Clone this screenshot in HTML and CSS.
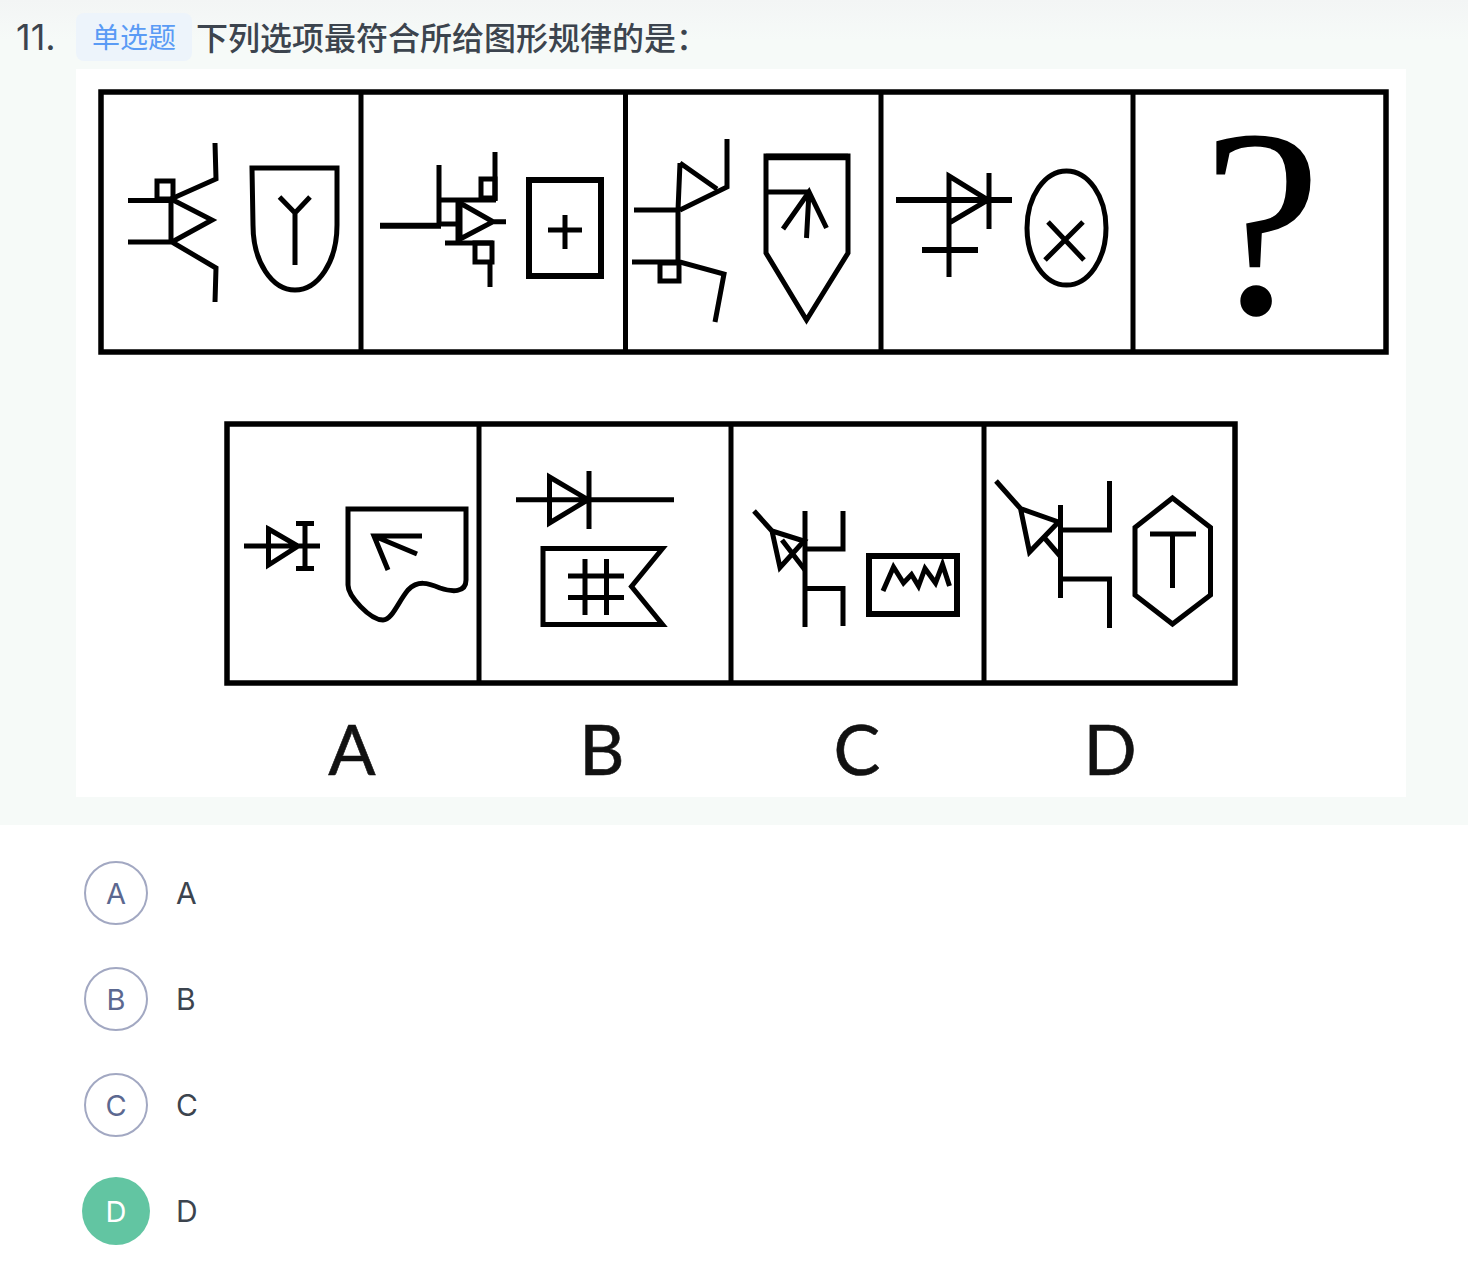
FILE: index.html
```html
<!DOCTYPE html>
<html lang="zh-CN">
<head>
    <meta charset="UTF-8">
    <meta name="viewport" content="width=device-width, initial-scale=1.0">
    <title>单选题 11</title>
    <link rel="stylesheet" href="styles.css">
</head>
<body>

    <!-- Question stem -->
    <div class="stem">
        <div class="stem-title">
            <span class="stem-num">11.</span>
            <span class="stem-tag">单选题</span>
            <span class="stem-text">下列选项最符合所给图形规律的是：</span>
        </div>

        <div class="stem-figure">
            <svg class="puzzle" viewBox="76 69 1330 728" xmlns="http://www.w3.org/2000/svg">
                <!-- top row frames -->
                <rect class="frame" x="101" y="92" width="1285" height="260"/>
                <path class="divider" d="M361 92V352M625.500 92V352M881 92V352M1133 92V352"/>

                <!-- figure 1 -->
                <path d="M215 143L216 179L171 199M128 200.500H171V242M128 242H172L216 268L215 302"/>
                <path d="M171 199L212 220L172 242"/>
                <rect x="157" y="181" width="16" height="18"/>
                <path d="M252 168H337V225C337 262 318 290 295 290C272 290 253 262 253 225Z"/>
                <path d="M295 265V213M279.500 197L295 213L310 197"/>

                <!-- figure 2 -->
                <path class="thick" d="M380 225.700H441"/>
                <path d="M439 165V226M441 200H496M495 152V201M441 224H458M458 200V243M445 243H493"/>
                <rect x="481" y="179" width="14" height="19"/>
                <path d="M460 203L493 221.700L460 239ZM493 221.700H506"/>
                <rect x="475" y="243" width="17" height="19"/>
                <path d="M490 262V287"/>
                <rect class="thick" x="529" y="180" width="72" height="96"/>
                <path d="M548 230H582M565 215V249"/>

                <!-- figure 3 -->
                <path d="M727 139V187L680 210M680 163L717 189M680 163L678 210V262M634 210H678M632 262H680L724 274L715 322"/>
                <rect x="660" y="263" width="19" height="18"/>
                <path d="M766 156H848V253L806.500 320L766 253ZM766 192H810"/>
                <path class="top-edge" d="M766 157H848"/>
                <path d="M806.500 238L809 192M783 229L809 192L826.500 228"/>

                <!-- figure 4 -->
                <path class="thick" d="M896 200H1012M922 250H978"/>
                <path d="M949 223V277M949 176L988 200L949 223ZM989 173V229"/>
                <ellipse cx="1066.500" cy="228" rx="39.500" ry="57"/>
                <path d="M1048 222L1084 260M1083 222L1045 260"/>

                <text class="mark" x="1262" y="313">?</text>

                <!-- answer row frames -->
                <rect class="frame" x="227" y="424" width="1008" height="259"/>
                <path class="divider" d="M479 424V683M731 424V683M984 424V683"/>

                <!-- option A -->
                <path d="M244 546H320M268.500 529L298 546L268.500 565ZM305 523V568M296 523.500H314M296 568.500H314"/>
                <path d="M348 509H466V580C466 593 452 592 440 588C428 583 418 580 408 590C398 602 392 620 383 620C370 620 348 596 348 585Z"/>
                <path d="M422 536H374L388 570M374 536L417 554"/>

                <!-- option B -->
                <path d="M516 499.700H674M549.500 477L588 499.700L549.500 523ZM589 471V529"/>
                <path d="M543 548.500H662.500L631.500 586.500L662.500 624.500H543Z"/>
                <path d="M585 559V615M606.500 559V615M568 576H624M568 597.500H624"/>

                <!-- option C -->
                <path d="M805 511V627M807 549H843V511M807 588.500H843V626"/>
                <path d="M754 511L772 531L804 541L780 567.500L772 531M782 540L805 570"/>
                <rect class="thick" x="869" y="556" width="88" height="58"/>
                <path d="M883 591L893.500 567L903.500 583L911.500 574.500L918.500 586L925 568.500L935.500 583L942.500 564.500L949.500 586"/>

                <!-- option D -->
                <path d="M1060.500 505V598M1063 530H1109.500V481M1063 579H1109.500V628"/>
                <path d="M996 481L1020.500 508.500L1058.500 522L1029.500 552L1020.500 508.500M1045 538.500L1060.500 556.500"/>
                <path d="M1172.500 498L1210.500 527.500V595L1172.500 624L1135 595V527.500Z"/>
                <path d="M1150 534H1196M1172.500 534V588"/>

                <text class="letter" x="352" y="775">A</text>
                <text class="letter" x="602" y="775">B</text>
                <text class="letter" x="857" y="775">C</text>
                <text class="letter" x="1110" y="775">D</text>
            </svg>
        </div>
    </div>

    <!-- Options -->
    <div class="options">
        <div class="option">
            <span class="option-slot"><span class="option-key">A</span></span>
            <span class="option-label">A</span>
        </div>
        <div class="option">
            <span class="option-slot"><span class="option-key">B</span></span>
            <span class="option-label">B</span>
        </div>
        <div class="option">
            <span class="option-slot"><span class="option-key">C</span></span>
            <span class="option-label">C</span>
        </div>
        <div class="option">
            <span class="option-slot"><span class="option-key correct">D</span></span>
            <span class="option-label">D</span>
        </div>
    </div>

</body>
</html>
```

FILE: styles.css
```css
* {
    margin: 0;
    padding: 0;
    box-sizing: border-box;
}

body {
    font-family: Inter, "Noto Sans CJK SC", sans-serif;
    background-color: #fff;
    color: #3c444e;
}

/* Question stem */
.stem {
    background: linear-gradient(#f3f5f5, #f6faf8 40px);
    padding: 13px 62px 28px 0;
    height: 825px;
}

.stem-title {
    display: flex;
    align-items: center;
    height: 48px;
}

.stem-num {
    width: 76px;
    padding-left: 16px;
    font-size: 36px;
}

.stem-tag {
    width: 116px;
    height: 48px;
    line-height: 50px;
    border-radius: 8px;
    background-color: #edf4fb;
    color: #5a9bf5;
    font-size: 28px;
    text-align: center;
}

.stem-text {
    margin: -3px 0 0 4px;
    font-size: 32px;
    font-weight: 500;
    white-space: nowrap;
}

.stem-figure {
    margin: 8px 0 0 76px;
    width: 1330px;
    height: 728px;
    background-color: #fff;
}

.puzzle {
    display: block;
    width: 100%;
    height: 100%;
    filter: blur(0.6px);
}

.puzzle path,
.puzzle rect,
.puzzle ellipse {
    fill: none;
    stroke: #000;
    stroke-width: 5;
}

.puzzle .frame {
    stroke-width: 5.5;
}

.puzzle .divider {
    stroke-width: 5;
}

.puzzle .thick {
    stroke-width: 6;
}

.puzzle .top-edge {
    stroke-width: 6.5;
}

.mark {
    font-family: "Liberation Serif", serif;
    font-size: 268px;
    text-anchor: middle;
}

.letter {
    font-family: Lato, sans-serif;
    font-size: 70px;
    text-anchor: middle;
    fill: #111;
    stroke: #111;
    stroke-width: 0.6;
}

/* Options */
.options {
    display: flex;
    flex-direction: column;
    gap: 38px;
    padding: 34px 0 0 82px;
}

.option {
    display: flex;
    align-items: center;
    gap: 26px;
    height: 68px;
}

.option-slot {
    display: flex;
    justify-content: center;
    align-items: center;
    width: 68px;
    height: 68px;
}

.option-key {
    display: flex;
    justify-content: center;
    align-items: center;
    width: 64px;
    height: 64px;
    border: 2px solid #a2a8c2;
    border-radius: 50%;
    color: #5c6890;
    font-size: 29px;
}

.option-key.correct {
    width: 68px;
    height: 68px;
    border: none;
    background-color: #62c5a2;
    color: #fff;
}

.option-label {
    font-size: 30px;
}
```
